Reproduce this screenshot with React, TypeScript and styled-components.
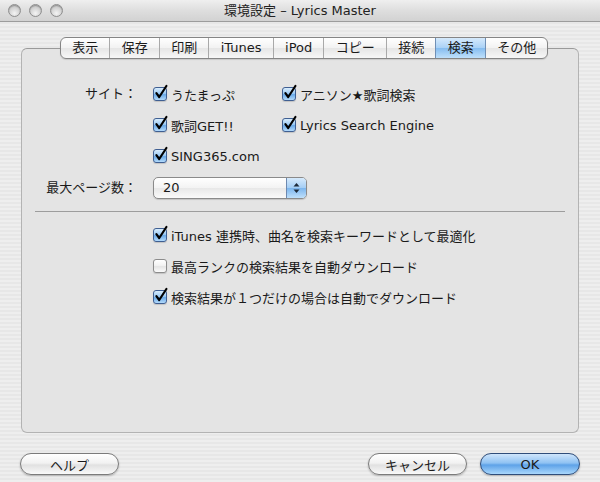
import React from 'react'
import styled, { createGlobalStyle } from 'styled-components'

const GlobalStyle = createGlobalStyle`
  body {
    margin: 0;
    background: #ececec;
  }
`

const FONT = `"DejaVu Sans", "Noto Sans CJK JP", sans-serif`

const Window = styled.div`
  width: 600px;
  height: 482px;
  display: flex;
  flex-direction: column;
  font-family: ${FONT};
  font-size: 13px;
  color: #1a1a1a;
  background: repeating-linear-gradient(to bottom, #eeeeee 0, #eeeeee 2px, #e7e7e7 2px, #e7e7e7 4px);
  overflow: hidden;
`

const TitleBar = styled.div`
  height: 22px;
  box-sizing: border-box;
  display: flex;
  align-items: center;
  padding-left: 8px;
  border-bottom: 1px solid #9c9c9c;
  background: linear-gradient(#efefef, #dedede 50%, #d2d2d2);
  position: relative;
`

const Lights = styled.div`
  display: flex;
  gap: 8px;
`

const Light = styled.span`
  width: 13px;
  height: 13px;
  box-sizing: border-box;
  border-radius: 50%;
  border: 1px solid #8e8e8e;
  background: radial-gradient(circle at 50% 75%, #f4f4f4 0, #d8d8d8 45%, #b9b9b9 100%);
  box-shadow: inset 0 1px 1px rgba(0, 0, 0, 0.25);
`

const Title = styled.div`
  position: absolute;
  left: 0;
  right: 0;
  text-align: center;
  font-size: 13px;
  line-height: 21px;
  color: #222;
  pointer-events: none;
`

const Body = styled.div`
  flex: 1;
  display: flex;
  flex-direction: column;
  padding: 15px 20px 7px;
`

const TabBar = styled.div`
  align-self: center;
  display: flex;
  height: 22px;
  box-sizing: border-box;
  border: 1px solid #858585;
  border-radius: 6px;
  overflow: hidden;
  background: linear-gradient(#ffffff, #f2f2f2 50%, #e6e6e6 52%, #f7f7f7);
  position: relative;
  z-index: 1;
  margin-left: 8px;
  box-shadow: 0 1px 1px rgba(0, 0, 0, 0.12);
`

const Tab = styled.div<{ $active?: boolean }>`
  padding: 0 11px 0 11.5px;
  line-height: 20px;
  font-size: 13px;
  white-space: nowrap;
  border-left: 1px solid #a9a9a9;
  &:first-child {
    border-left: none;
  }
  ${p =>
    p.$active &&
    `
    background: linear-gradient(#d6eafc, #a9d1f6 50%, #86bdf0 52%, #bfe0fb);
    border-left-color: #6f8fb5;
    border-right: 1px solid #6f8fb5;
    & + div { border-left: none; }
  `}
`

const GroupBox = styled.div`
  flex: 1;
  margin: -11px 1px 0;
  box-sizing: border-box;
  border: 1px solid #b3b3b3;
  border-top-color: #9a9a9a;
  border-radius: 6px;
  background: #e4e4e4;
  padding-top: 35px;
`

const Form = styled.div`
  display: grid;
  grid-template-columns: 115px auto;
  column-gap: 16px;
  row-gap: 11px;
`

const Label = styled.div<{ $top?: boolean }>`
  text-align: right;
  line-height: 20px;
  align-self: ${p => (p.$top ? 'start' : 'center')};
  white-space: nowrap;
`

const SiteGrid = styled.div`
  display: grid;
  grid-template-columns: 129px auto;
  row-gap: 11px;
`

const Item = styled.label<{ $span?: boolean }>`
  display: flex;
  align-items: center;
  gap: 4px;
  height: 20px;
  white-space: nowrap;
  grid-column: ${p => (p.$span ? '1 / span 2' : 'auto')};
`

const Box = styled.span<{ $checked: boolean }>`
  position: relative;
  flex-shrink: 0;
  width: 14px;
  height: 14px;
  box-sizing: border-box;
  border-radius: 3px;
  border: 1px solid ${p => (p.$checked ? '#3f5f92' : '#8c8c8c')};
  background: ${p =>
    p.$checked
      ? 'linear-gradient(#d9edfd, #9ccaf4 45%, #6aaae8 55%, #b3dafb)'
      : 'linear-gradient(#ffffff, #f2f2f2 45%, #e4e4e4 55%, #fbfbfb)'};
  box-shadow: 0 1px 1px rgba(0, 0, 0, 0.15);
  svg {
    position: absolute;
    left: 0;
    top: -3px;
    overflow: visible;
  }
`

const Popup = styled.div`
  width: 154px;
  height: 22px;
  box-sizing: border-box;
  display: flex;
  border: 1px solid #8a8a8a;
  border-radius: 5px;
  overflow: hidden;
  background: linear-gradient(#ffffff, #f3f3f3 50%, #e8e8e8 52%, #fafafa);
  box-shadow: 0 1px 1px rgba(0, 0, 0, 0.15);
`

const PopupValue = styled.span`
  flex: 1;
  padding-left: 9px;
  line-height: 20px;
`

const PopupArrows = styled.span`
  width: 19px;
  display: flex;
  align-items: center;
  justify-content: center;
  border-left: 1px solid #6d89b0;
  background: linear-gradient(#d6eafc, #a3cdf5 50%, #7db6ee 52%, #bfe0fb);
`

const Separator = styled.div`
  height: 1px;
  background: #9d9d9d;
  margin: 12px 13px 13px;
`

const Options = styled.div`
  display: flex;
  flex-direction: column;
  gap: 11px;
  padding-left: 131px;
`

const ButtonRow = styled.div`
  display: flex;
  align-items: center;
  margin-top: 20px;
  gap: 13px;
`

const Spacer = styled.div`
  flex: 1;
`

const Button = styled.button<{ $primary?: boolean }>`
  width: ${p => (p.$primary ? '100px' : '99px')};
  height: 22px;
  box-sizing: border-box;
  border-radius: 11px;
  font-family: ${FONT};
  font-size: 13px;
  color: #1a1a1a;
  padding: 0;
  border: 1px solid ${p => (p.$primary ? '#2f4d7a' : '#7b7b7b')};
  background: ${p =>
    p.$primary
      ? 'linear-gradient(#cfe5fb, #8fc2f3 45%, #5ea2e8 55%, #a9d7fc)'
      : 'linear-gradient(#ffffff, #f2f2f2 45%, #e1e1e1 55%, #f9f9f9)'};
  box-shadow: 0 1px 2px rgba(0, 0, 0, 0.25);
`

const Check = ({ checked }: { checked: boolean }) => (
  <Box $checked={checked}>
    {checked && (
      <svg width="14" height="14" viewBox="0 0 14 14">
        <path d="M2.4 8.2 L5.2 12 L12.4 1" fill="none" stroke="#000" strokeWidth="2.2" strokeLinecap="round" strokeLinejoin="round" />
      </svg>
    )}
  </Box>
)

const Arrows = () => (
  <svg width="7" height="12" viewBox="0 0 7 12">
    <path d="M3.5 1 L6.5 4.5 H0.5 Z" fill="#1d2a3a" />
    <path d="M3.5 11 L6.5 7.5 H0.5 Z" fill="#1d2a3a" />
  </svg>
)

const tabs = ['表示', '保存', '印刷', 'iTunes', 'iPod', 'コピー', '接続', '検索', 'その他']

const sites = [
  { name: 'うたまっぷ', checked: true },
  { name: 'アニソン★歌詞検索', checked: true },
  { name: '歌詞GET!!', checked: true },
  { name: 'Lyrics Search Engine', checked: true },
  { name: 'SING365.com', checked: true, span: true },
]

const options = [
  { name: 'iTunes 連携時、曲名を検索キーワードとして最適化', checked: true },
  { name: '最高ランクの検索結果を自動ダウンロード', checked: false },
  { name: '検索結果が１つだけの場合は自動でダウンロード', checked: true },
]

export default function App() {
  return (
    <>
      <GlobalStyle />
      <Window>
        <TitleBar>
          <Lights>
            <Light />
            <Light />
            <Light />
          </Lights>
          <Title>環境設定 – Lyrics Master</Title>
        </TitleBar>
        <Body>
          <TabBar>
            {tabs.map(t => (
              <Tab key={t} $active={t === '検索'}>{t}</Tab>
            ))}
          </TabBar>
          <GroupBox>
            <Form>
              <Label $top>サイト：</Label>
              <SiteGrid>
                {sites.map(s => (
                  <Item key={s.name} $span={s.span}>
                    <Check checked={s.checked} />
                    {s.name}
                  </Item>
                ))}
              </SiteGrid>
              <Label>最大ページ数：</Label>
              <Popup>
                <PopupValue>20</PopupValue>
                <PopupArrows>
                  <Arrows />
                </PopupArrows>
              </Popup>
            </Form>
            <Separator />
            <Options>
              {options.map(o => (
                <Item key={o.name}>
                  <Check checked={o.checked} />
                  {o.name}
                </Item>
              ))}
            </Options>
          </GroupBox>
          <ButtonRow>
            <Button>ヘルプ</Button>
            <Spacer />
            <Button>キャンセル</Button>
            <Button $primary>OK</Button>
          </ButtonRow>
        </Body>
      </Window>
    </>
  )
}
